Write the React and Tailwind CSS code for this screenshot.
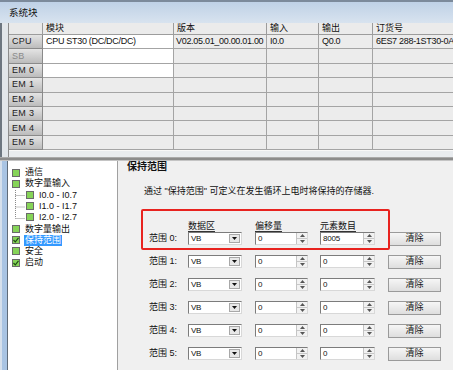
const tableRows = [
  { h: 'CPU', m: 'CPU ST30 (DC/DC/DC)', v: 'V02.05.01_00.00.01.00', i: 'I0.0', o: 'Q0.0', n: '6ES7 288-1ST30-0AA0', white: true },
  { h: 'SB', dim: true, white: true },
  { h: 'EM 0', white: true },
  { h: 'EM 1' },
  { h: 'EM 2' },
  { h: 'EM 3' },
  { h: 'EM 4' },
  { h: 'EM 5' },
];

function Box({ checked }) {
  return (
    <span className="relative inline-flex h-[8px] w-[8px] shrink-0 items-center justify-center border border-[#6a6a6a] bg-[#86d458]">
      {checked && (
        <svg width="6" height="6" viewBox="0 0 6 6" className="absolute">
          <path d="M0.5 3 L2.3 4.8 L5.5 0.8" fill="none" stroke="#1d4d12" strokeWidth="1.2" />
        </svg>
      )}
    </span>
  );
}

function TreeItem({ label, checked, selected }) {
  return (
    <div className="flex h-[11.2px] items-center gap-[4px] pl-[4px]">
      <Box checked={checked} />
      <span className={selected ? 'h-[11px] bg-[#3399ff] px-[1px] leading-[11px] text-white' : 'px-[1px] leading-[11px] text-[#111]'}>
        {label}
      </span>
    </div>
  );
}

function Combo() {
  return (
    <div className="flex h-[13px] w-[54px] items-stretch border border-[#7c7c7c] border-b-[#d8d8d8] border-r-[#d8d8d8] bg-white">
      <span className="flex flex-1 items-center pl-[2px] text-[8px] tracking-[-0.4px] text-[#111]">VB</span>
      <span className="m-[1px] flex w-[11px] items-center justify-center border border-[#a8a8a8] bg-[#e8e8e8]">
        <svg width="5" height="3" viewBox="0 0 5 3">
          <path d="M0 0 H5 L2.5 3 Z" fill="#111" />
        </svg>
      </span>
    </div>
  );
}

function Spin({ value, width }) {
  return (
    <div className={`flex h-[13px] items-stretch border border-[#7c7c7c] border-b-[#d8d8d8] border-r-[#d8d8d8] bg-white ${width}`}>
      <span className="flex flex-1 items-center pl-[2px] text-[8px] tracking-[-0.2px] text-[#111]">{value}</span>
      <span className="flex w-[11px] flex-col border-l border-[#c4c4c4] bg-[#f2f2f2]">
        <span className="flex flex-1 items-center justify-center border-b border-[#c8c8c8]">
          <svg width="5" height="3" viewBox="0 0 5 3">
            <path d="M2.5 0 L5 3 H0 Z" fill="#555" />
          </svg>
        </span>
        <span className="flex flex-1 items-center justify-center">
          <svg width="5" height="3" viewBox="0 0 5 3">
            <path d="M0 0 H5 L2.5 3 Z" fill="#555" />
          </svg>
        </span>
      </span>
    </div>
  );
}

function RangeRow({ n, count }) {
  return (
    <div className="flex h-[13px] items-center">
      <span className="w-[39px] text-[9px] leading-none text-[#111]">范围 {n}:</span>
      <Combo />
      <span className="ml-[13px]">
        <Spin value="0" width="w-[53px]" />
      </span>
      <span className="ml-[12px]">
        <Spin value={count} width="w-[55px]" />
      </span>
      <button className="ml-[13px] flex h-[14px] w-[53px] items-center justify-center border border-[#9a9a9a] bg-gradient-to-b from-[#f6f6f6] to-[#dedede] text-[9px] leading-none text-[#111]">
        清除
      </button>
    </div>
  );
}

export default function App() {
  return (
    <div className="flex h-[370px] w-[453px] flex-col overflow-hidden bg-[#f0f0f0] font-['Liberation_Sans','Noto_Sans_CJK_SC',sans-serif]">
      {/* title bar */}
      <div className="flex h-[23px] shrink-0 items-center border-t-2 border-[#7c8a9b] bg-gradient-to-b from-[#bfd1e6] to-[#d8e3ef] pl-[9px]">
        <span className="text-[9.5px] leading-none text-[#111]">系统块</span>
      </div>

      {/* module table */}
      <div className="flex shrink-0">
        <div className="w-[8px] border-l-2 border-[#6d7680] bg-[#e2e6ea]" />
        <div className="flex-1 overflow-hidden border-l border-[#8c8c8c]">
          <div className="grid grid-cols-[34px_131px_93px_52px_54px_81px] text-[9px] leading-none text-[#111]">
            <div className="h-[12px] border-b border-r border-[#9c9c9c] bg-[#e9e9e9]" />
            {['模块', '版本', '输入', '输出', '订货号'].map((t) => (
              <div key={t} className="flex h-[12px] items-center border-b border-r border-[#9c9c9c] bg-[#ebebeb] pl-[3px]">
                {t}
              </div>
            ))}
            {tableRows.map((r) => (
              <div key={r.h} className="contents">
                <div className={`flex h-[14.4px] items-center border-b border-r border-[#8a8a8a] bg-gradient-to-b from-[#e4e4e4] to-[#bcbcbc] pl-[3px] tracking-[0.3px] ${r.dim ? 'text-[#8a8a8a]' : 'text-[#222]'}`}>
                  {r.h}
                </div>
                <div className={`flex h-[14.4px] items-center whitespace-nowrap border-b border-r border-[#a4a4a4] pl-[3px] tracking-[-0.3px] ${r.white ? 'bg-white' : 'bg-[#ececec]'}`}>
                  {r.m}
                </div>
                <div className="flex h-[14.4px] items-center whitespace-nowrap border-b border-r border-[#a4a4a4] bg-[#ececec] pl-[2px] tracking-[-0.3px]">
                  {r.v}
                </div>
                <div className="flex h-[14.4px] items-center border-b border-r border-[#a4a4a4] bg-[#ececec] pl-[3px] tracking-[-0.3px]">
                  {r.i}
                </div>
                <div className="flex h-[14.4px] items-center border-b border-r border-[#a4a4a4] bg-[#ececec] pl-[3px] tracking-[-0.3px]">
                  {r.o}
                </div>
                <div className="flex h-[14.4px] items-center overflow-hidden whitespace-nowrap border-b border-[#a4a4a4] bg-[#ececec] pl-[3px] tracking-[-0.3px]">
                  {r.n}
                </div>
              </div>
            ))}
          </div>
          <div className="h-[7px] border-t border-[#f8f8f8] bg-[#e9ecef]" />
        </div>
      </div>

      {/* splitter */}
      <div className="h-[4px] shrink-0 border-t border-[#aaaaaa] bg-[#8c8c8c] border-b border-b-[#c4c4c4]" />

      {/* lower area */}
      <div className="flex flex-1">
        <div className="w-[8px] border-l-2 border-[#d6e0ec] bg-[#a9c4e3] border-r border-r-[#5f6b78]" />
        <div className="w-[110px] border-r border-[#a0a0a0] bg-white pt-[6px] text-[9px]">
          <TreeItem label="通信" />
          <TreeItem label="数字量输入" />
          <div className="flex pl-[7px]">
            <svg width="11" height="34" viewBox="0 0 11 34" className="shrink-0">
              <path d="M0.5 0 V28.5 M0.5 5.5 H10 M0.5 17 H10 M0.5 28.5 H10" fill="none" stroke="#8a8a8a" strokeDasharray="1 1" />
            </svg>
            <div className="flex flex-col">
              {['I0.0 - I0.7', 'I1.0 - I1.7', 'I2.0 - I2.7'].map((t) => (
                <div key={t} className="flex h-[11.2px] items-center gap-[5px]">
                  <Box />
                  <span className="leading-none text-[#111]">{t}</span>
                </div>
              ))}
            </div>
          </div>
          <TreeItem label="数字量输出" />
          <TreeItem label="保持范围" checked selected />
          <TreeItem label="安全" />
          <TreeItem label="启动" checked />
        </div>

        <div className="relative flex-1 bg-[#f0f0f0] pl-[9px]">
          <div className="text-[10px] font-bold leading-[12px] text-[#111]">保持范围</div>
          <div className="mt-[12px] pl-[17px] text-[9px] leading-[12px] text-[#111]">
            通过 "保持范围" 可定义在发生循环上电时将保持的存储器.
          </div>
          <div className="pl-[22px]">
            <div className="mt-[24px] flex h-[10px] text-[9px] leading-[10px] text-[#111]">
              <span className="w-[39px]" />
              <span className="w-[67px]"><span className="border-b border-[#333]">数据区</span></span>
              <span className="w-[65px]"><span className="border-b border-[#333]">偏移量</span></span>
              <span><span className="border-b border-[#333]">元素数目</span></span>
            </div>
            <div className="mt-[1px] flex flex-col gap-[10px]">
              <RangeRow n={0} count="8005" />
              <RangeRow n={1} count="0" />
              <RangeRow n={2} count="0" />
              <RangeRow n={3} count="0" />
              <RangeRow n={4} count="0" />
              <RangeRow n={5} count="0" />
            </div>
          </div>
          {/* red annotation frame */}
          <div className="absolute left-[23px] top-[48px] h-[41px] w-[249px] rounded-[2px] border-2 border-[#e8231f]" />
        </div>
      </div>
    </div>
  );
}
